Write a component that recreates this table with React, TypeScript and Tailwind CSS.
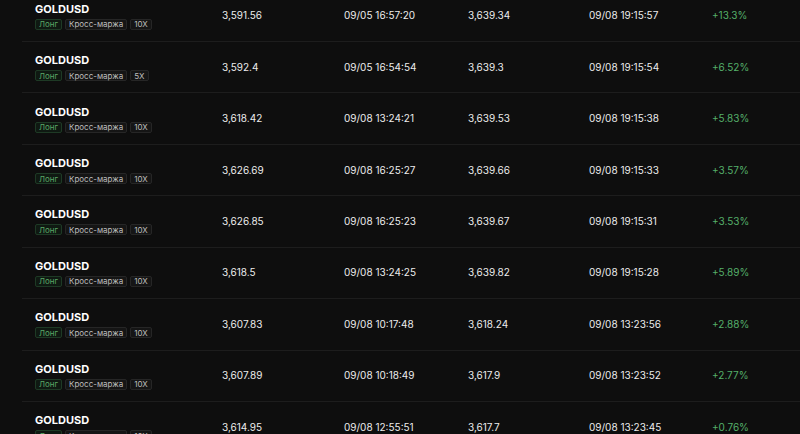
const rows = [
  { lev: '10X', open: '3,591.56', openAt: '09/05 16:57:20', close: '3,639.34', closeAt: '09/08 19:15:57', pnl: '+13.3%' },
  { lev: '5X', open: '3,592.4', openAt: '09/05 16:54:54', close: '3,639.3', closeAt: '09/08 19:15:54', pnl: '+6.52%' },
  { lev: '10X', open: '3,618.42', openAt: '09/08 13:24:21', close: '3,639.53', closeAt: '09/08 19:15:38', pnl: '+5.83%' },
  { lev: '10X', open: '3,626.69', openAt: '09/08 16:25:27', close: '3,639.66', closeAt: '09/08 19:15:33', pnl: '+3.57%' },
  { lev: '10X', open: '3,626.85', openAt: '09/08 16:25:23', close: '3,639.67', closeAt: '09/08 19:15:31', pnl: '+3.53%' },
  { lev: '10X', open: '3,618.5', openAt: '09/08 13:24:25', close: '3,639.82', closeAt: '09/08 19:15:28', pnl: '+5.89%' },
  { lev: '10X', open: '3,607.83', openAt: '09/08 10:17:48', close: '3,618.24', closeAt: '09/08 13:23:56', pnl: '+2.88%' },
  { lev: '10X', open: '3,607.89', openAt: '09/08 10:18:49', close: '3,617.9', closeAt: '09/08 13:23:52', pnl: '+2.77%' },
  { lev: '10X', open: '3,614.95', openAt: '09/08 12:55:51', close: '3,617.7', closeAt: '09/08 13:23:45', pnl: '+0.76%' },
];

// small pill under the symbol
const Tag = ({ children, green }: { children: React.ReactNode; green?: boolean }) => (
  <span
    className={`flex h-[11px] items-center rounded-[2px] border px-[3px] text-[8px] leading-none ${
      green ? 'border-[#1e3a25] bg-[#0f1912] text-[#5aa866]' : 'border-[#262626] bg-[#151515] text-[#bdbdbd]'
    }`}
  >
    {children}
  </span>
);

export default function App() {
  return (
    <div
      className="h-[434px] w-full overflow-hidden bg-[#0e0e0e] text-[#ececec]"
      style={{ fontFamily: 'Inter, "Noto Sans", sans-serif' }}
    >
      <div className="ml-[22px] mt-[-9.43px]">
        {rows.map((r, i) => (
          <div key={i} className="flex h-[51.43px] items-center border-b border-[#1d1d1d] text-[10px]">
            <div className="flex w-[200px] flex-col gap-[3px] pl-[13px] pt-[1px]">
              <span className="text-[11px] font-bold leading-[13px] text-white">GOLDUSD</span>
              <div className="flex gap-[3px]">
                <Tag green>Лонг</Tag>
                <Tag>Кросс-маржа</Tag>
                <Tag>{r.lev}</Tag>
              </div>
            </div>
            <div className="w-[122px]">{r.open}</div>
            <div className="w-[124px]">{r.openAt}</div>
            <div className="w-[121px]">{r.close}</div>
            <div className="w-[123px]">{r.closeAt}</div>
            <div className="text-[#55b06a]">{r.pnl}</div>
          </div>
        ))}
      </div>
    </div>
  );
}
